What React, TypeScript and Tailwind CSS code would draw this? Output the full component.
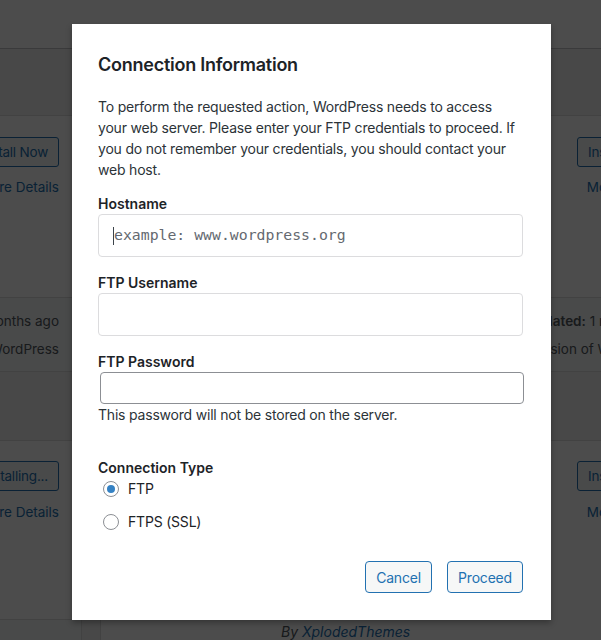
import React from "react";

function BgButton({ children }: { children: React.ReactNode }) {
  return (
    <div className="h-[30px] px-[10px] flex items-center rounded-[3px] border border-[#2271b1] bg-[#f6f7f7] text-[#2271b1] text-[13.5px] tracking-[-0.2px] whitespace-nowrap">
      {children}
    </div>
  );
}

function Column({ right }: { right?: boolean }) {
  return (
    <div className={(right ? "w-[590px]" : "w-[584px]") + " shrink-0 flex flex-col"}>
      <div className="h-[182px] bg-white border border-[#dcdcde] border-b-0 pt-[21px] pr-[22px] flex flex-col items-end">
        <BgButton>Install Now</BgButton>
        <div className="mt-[10px] leading-[21px] text-[13.5px] text-[#2271b1] whitespace-nowrap">More Details</div>
      </div>
      <div className="h-[75px] bg-[#f6f7f7] border border-[#dcdcde] pt-[9px] pr-[22px] text-right leading-[28px] text-[13.5px] text-[#50575e] whitespace-nowrap">
        <div>
          <span className="font-semibold">Last Updated:</span> {right ? "1 month ago" : "4 months ago"}
        </div>
        <div>
          <span className="font-semibold">Compatible</span> with your version of WordPress
        </div>
      </div>
      <div className="h-[68px]" />
      <div className={(right ? "h-[260px]" : "h-[180px]") + " bg-white border border-[#dcdcde] pt-[20px] pr-[22px] flex flex-col"}>
        <div className="flex flex-col items-end">
          <BgButton>{right ? "Install Now" : "Installing..."}</BgButton>
          <div className="mt-[11px] leading-[21px] text-[13.5px] text-[#2271b1] whitespace-nowrap">More Details</div>
        </div>
        {right && (
          <div className="mt-[98px] pl-[180px] leading-[21px] text-[14px] italic text-[#50575e] whitespace-nowrap">
            By <span className="text-[#2271b1]">XplodedThemes</span>
          </div>
        )}
      </div>
      {!right && <div className="h-[60px] bg-[#f6f7f7] border border-t-0 border-[#dcdcde]" />}
    </div>
  );
}

function Radio({ checked, label, className }: { checked?: boolean; label: string; className?: string }) {
  return (
    <div className={"flex items-center h-[21px] ml-[5px] " + (className ?? "")}>
      <div className="w-4 h-4 rounded-full border border-[#8c8f94] bg-white flex items-center justify-center">
        {checked && <div className="w-2 h-2 rounded-full bg-[#3582c4]" />}
      </div>
      <span className="ml-[9px] leading-[21px]">{label}</span>
    </div>
  );
}

export default function App() {
  return (
    <div className="relative w-[601px] h-[640px] overflow-hidden bg-[#f0f0f1] [font-family:Inter,sans-serif]">
      <div className="h-[49px] bg-white border-b border-[#c3c4c7]" />
      <div className="h-[66px]" />
      <div className="flex gap-[18px] ml-[-502px]">
        <Column />
        <Column right />
      </div>

      <div className="absolute inset-0 bg-black/70" />

      <div className="absolute left-[72px] top-[24px] w-[479px] bg-white shadow-[0_3px_6px_rgba(0,0,0,0.3)] pl-[26px] pr-[27px] pt-[29px] pb-[27px] text-[#1d2327] text-[14px] tracking-[-0.2px]">
        <h1 className="text-[18px] leading-[24px] font-semibold tracking-[-0.25px]">Connection Information</h1>
        <p className="mt-[19px] leading-[21px] whitespace-nowrap text-[#2c3338]">
          To perform the requested action, WordPress needs to access
          <br />
          your web server. Please enter your FTP credentials to proceed. If
          <br />
          you do not remember your credentials, you should contact your
          <br />
          web host.
        </p>

        <div className="mt-[13px] font-semibold leading-[21px] tracking-normal">Hostname</div>
        <div className="h-[43px] w-[425px] border border-[#dcdcde] rounded-[4px] flex items-center pl-[14px]">
          <div className="w-px h-[18px] bg-[#3c434a]" />
          <span className="text-[14.8px] tracking-normal text-[#646970] [font-family:'DejaVu_Sans_Mono','Liberation_Mono',monospace]">
            example: www.wordpress.org
          </span>
        </div>

        <div className="mt-[15px] font-semibold leading-[21px] tracking-normal">FTP Username</div>
        <div className="h-[43px] w-[425px] border border-[#dcdcde] rounded-[4px]" />

        <div className="mt-[15px] font-semibold leading-[21px] tracking-normal">FTP Password</div>
        <div className="h-[32px] w-[424px] ml-[2px] border border-[#8c8f94] rounded-[4px]" />
        <div className="leading-[21px] text-[#2c3338]">This password will not be stored on the server.</div>

        <div className="mt-[32px] font-semibold leading-[21px] tracking-normal">Connection Type</div>
        <Radio checked label="FTP" />
        <Radio label="FTPS (SSL)" className="mt-[12px]" />

        <div className="mt-[29px] flex justify-end gap-[15px] mr-[1px]">
          <div className="h-[32px] w-[67px] flex items-center justify-center rounded-[4px] border border-[#2271b1] bg-[#f6f7f7] text-[#2271b1]">
            Cancel
          </div>
          <div className="h-[32px] w-[76px] flex items-center justify-center rounded-[4px] border border-[#2271b1] bg-[#f6f7f7] text-[#2271b1]">
            Proceed
          </div>
        </div>
      </div>
    </div>
  );
}
